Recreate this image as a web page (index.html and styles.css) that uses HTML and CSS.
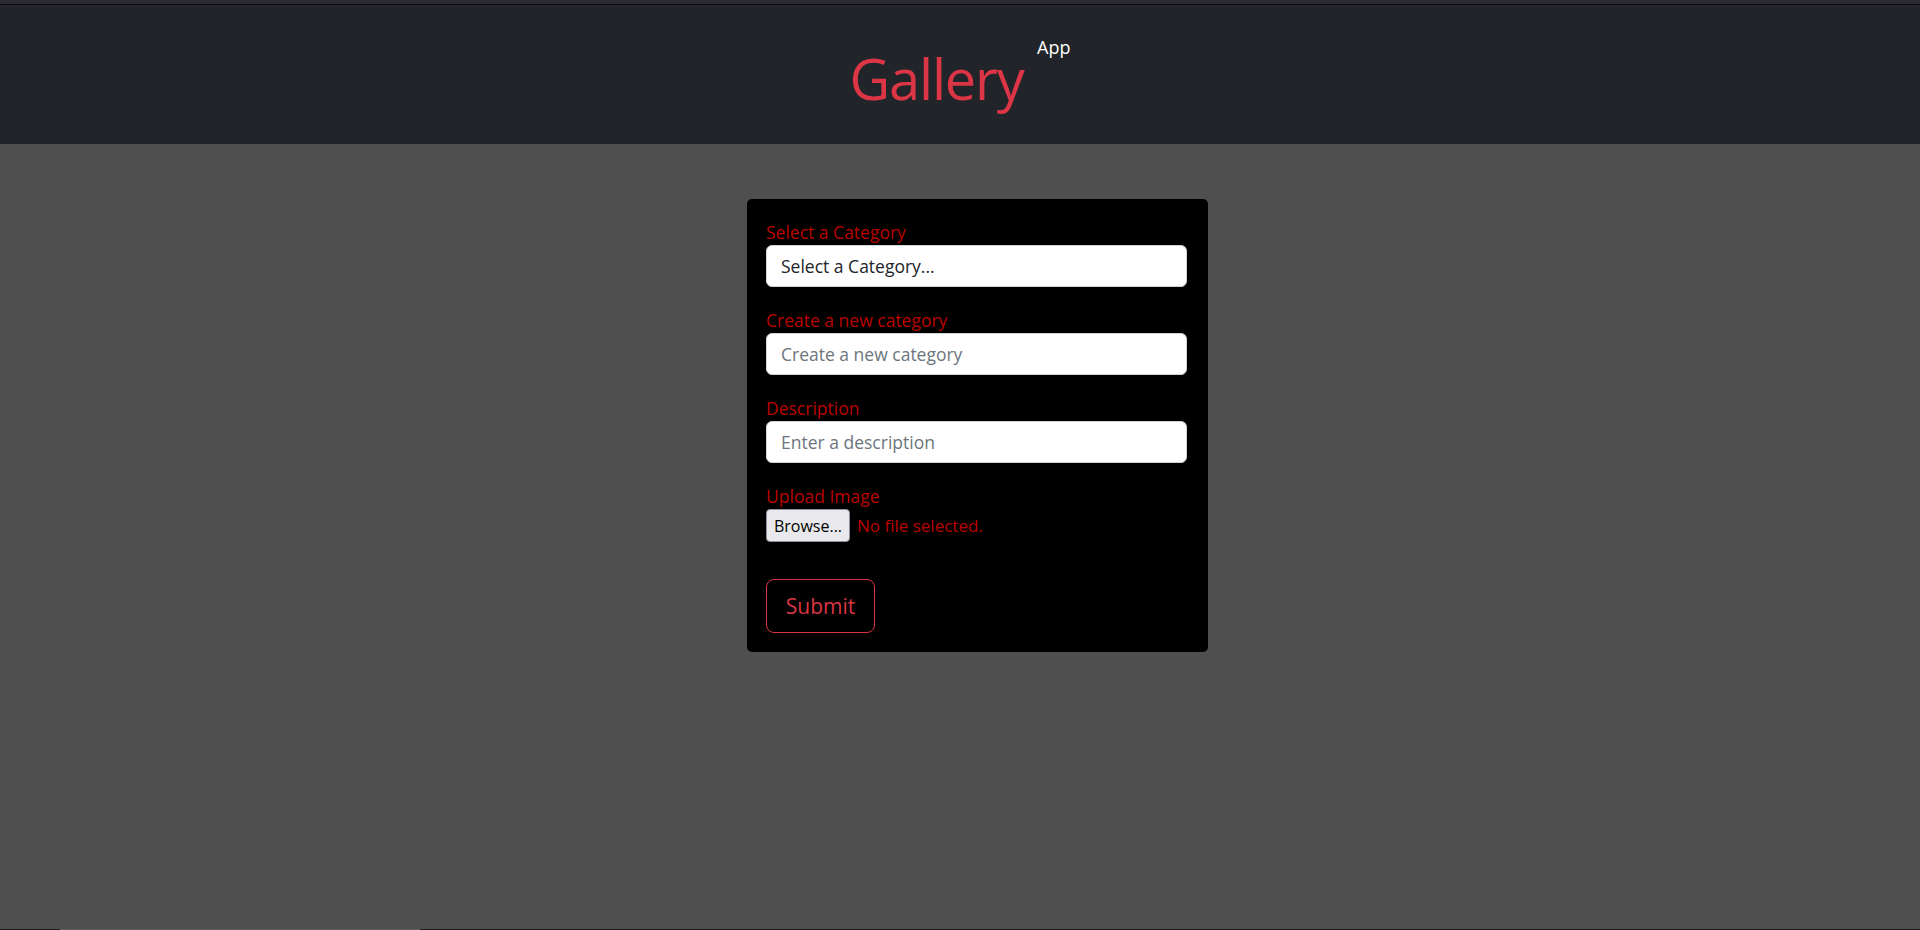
FILE: index.html
```html
<!DOCTYPE html>
<html lang="en">
<head>
<meta charset="utf-8">
<title>Gallery App</title>
<link rel="stylesheet" href="styles.css">
</head>
<body>
<div class="topstrip"></div>
<header class="header">
  <h1 class="brand">Gallery <sup class="brand-sup">App</sup></h1>
</header>
<main class="main">
  <form class="card">
    <div class="group">
      <label class="label">Select a Category</label>
      <div class="field field-select">Select a Category...</div>
    </div>
    <div class="group">
      <label class="label">Create a new category</label>
      <input class="field" type="text" placeholder="Create a new category">
    </div>
    <div class="group">
      <label class="label">Description</label>
      <input class="field" type="text" placeholder="Enter a description">
    </div>
    <div class="group group-upload">
      <label class="label">Upload Image</label>
      <div class="file-row">
        <span class="browse">Browse...</span>
        <span class="file-status">No file selected.</span>
      </div>
    </div>
    <button class="submit" type="button">Submit</button>
  </form>
</main>
<div class="hscroll"><div class="hscroll-thumb"></div></div>
</body>
</html>
```

FILE: styles.css
```css
html, body {
  margin: 0;
  padding: 0;
}
body {
  background: #4f4f4f;
  min-height: 100vh;
  font-family: "Open Sans", "Noto Sans", sans-serif;
}
.topstrip {
  height: 4px;
  background: #2b2a33;
  border-bottom: 1px solid #0c0c0c;
}
.header {
  height: 139px;
  box-sizing: border-box;
  background: #212529;
  display: flex;
  justify-content: center;
  align-items: flex-start;
  padding-top: 37px;
}
.brand {
  margin: 0;
  font-weight: 400;
  font-size: 56px;
  line-height: 72px;
  letter-spacing: -1.2px;
  color: #dc3545;
  white-space: nowrap;
}
.brand-sup {
  font-size: 18px;
  line-height: 0;
  letter-spacing: 0;
  vertical-align: 46px;
  color: #ffffff;
}
.main {
  padding-top: 55px;
  padding-left: 747px;
}
.card {
  width: 461px;
  box-sizing: border-box;
  background: #000000;
  border-radius: 5px;
  padding: 19px 21px 19px 19px;
}
.group {
  margin-bottom: 19px;
}
.label {
  display: block;
  font-size: 17.5px;
  line-height: 27px;
  padding-top: 1px;
  margin-bottom: -1px;
  color: #bb0000;
}
.field {
  display: block;
  width: 100%;
  height: 42px;
  box-sizing: border-box;
  margin: 0;
  border: 1px solid #ced4da;
  border-radius: 6px;
  background: #ffffff;
  padding: 0 14px;
  font-family: "Open Sans", "Noto Sans", sans-serif;
  font-size: 17.5px;
  color: #212529;
  outline: none;
}
.field-select {
  display: flex;
  align-items: center;
}
.field::placeholder {
  color: #6c757d;
  opacity: 1;
}
.group-upload {
  margin-bottom: 37px;
}
.file-row {
  display: flex;
  align-items: center;
  height: 33px;
}
.browse {
  display: flex;
  align-items: center;
  justify-content: center;
  width: 84px;
  height: 33px;
  box-sizing: border-box;
  background: #e9e9ed;
  border: 1px solid #8f8f9d;
  border-radius: 4px;
  font-size: 16px;
  color: #000000;
}
.file-status {
  margin-left: 7px;
  font-size: 17px;
  color: #bb0000;
}
.submit {
  display: block;
  width: 109px;
  height: 54px;
  box-sizing: border-box;
  background: transparent;
  border: 1px solid #dc3545;
  border-radius: 8px;
  color: #dc3545;
  font-family: "Open Sans", "Noto Sans", sans-serif;
  font-size: 21px;
  padding: 0;
  cursor: pointer;
}
.hscroll {
  position: fixed;
  left: 0;
  right: 0;
  bottom: 0;
  height: 1px;
  background: #1c1c1c;
}
.hscroll-thumb {
  margin-left: 60px;
  width: 360px;
  height: 1px;
  background: #5e5e5e;
}
```
